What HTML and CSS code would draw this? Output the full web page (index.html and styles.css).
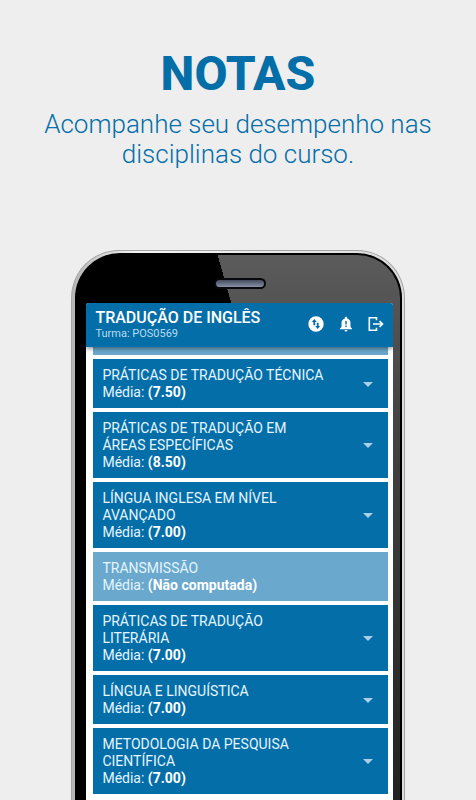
FILE: index.html
```html
<!DOCTYPE html>
<html lang="pt-BR">
<head>
  <meta charset="utf-8">
  <meta name="viewport" content="width=device-width, initial-scale=1">
  <title>Notas</title>
  <link rel="stylesheet" href="styles.css">
</head>
<body>
  <header class="intro">
    <h1>NOTAS</h1>
    <p>Acompanhe seu desempenho nas disciplinas do curso.</p>
  </header>

  <main class="phone">
    <div class="bezel">
      <div class="speaker"></div>
      <div class="screen">
        <div class="appbar">
          <div class="course">
            <h2>TRADUÇÃO DE INGLÊS</h2>
            <p>Turma: POS0569</p>
          </div>
          <button class="icon" aria-label="Trocar turma">
            <svg viewBox="0 0 16 16"><circle cx="8" cy="8" r="7.700" fill="#fff"/><path d="M6.300 3L3.800 6H5.400V9.200H7.200V6H8.800z M9.700 13L12.200 10H10.600V6.800H8.800V10H7.200z" fill="#046ea9"/></svg>
          </button>
          <button class="icon" aria-label="Avisos">
            <svg viewBox="0 0 16 16"><path d="M8 .8c-.7 0-1.200.5-1.200 1.200v.5C4.600 3.100 3.500 4.900 3.500 7v4L2 12.500v.8h12v-.8L12.500 11V7c0-2.100-1.100-3.900-3.300-4.500V2c0-.7-.5-1.200-1.200-1.200zM6.500 14a1.500 1.500 0 0 0 3 0z" fill="#fff"/><path d="M7.300 5h1.400v3.500H7.300zM7.300 9.600h1.400V11H7.300z" fill="#046ea9"/></svg>
          </button>
          <button class="icon" aria-label="Sair">
            <svg viewBox="0 0 16 16" fill="none" stroke="#fff" stroke-width="1.600"><path d="M8.500 4.200V1.800H1.300v12.400h7.200v-2.400"/><path d="M5 8h9"/><path d="M11.500 5l3 3-3 3"/></svg>
          </button>
        </div>

        <div class="list">
          <div class="card off peek"></div>
          <button class="card">
            <span class="text"><span>PRÁTICAS DE TRADUÇÃO TÉCNICA</span><span>Média: <b>(7.50)</b></span></span>
            <span class="arrow"></span>
          </button>
          <button class="card">
            <span class="text"><span>PRÁTICAS DE TRADUÇÃO EM ÁREAS ESPECÍFICAS</span><span>Média: <b>(8.50)</b></span></span>
            <span class="arrow"></span>
          </button>
          <button class="card">
            <span class="text"><span>LÍNGUA INGLESA EM NÍVEL AVANÇADO</span><span>Média: <b>(7.00)</b></span></span>
            <span class="arrow"></span>
          </button>
          <div class="card off">
            <span class="text"><span>TRANSMISSÃO</span><span>Média: <b>(Não computada)</b></span></span>
          </div>
          <button class="card">
            <span class="text"><span>PRÁTICAS DE TRADUÇÃO LITERÁRIA</span><span>Média: <b>(7.00)</b></span></span>
            <span class="arrow"></span>
          </button>
          <button class="card">
            <span class="text"><span>LÍNGUA E LINGUÍSTICA</span><span>Média: <b>(7.00)</b></span></span>
            <span class="arrow"></span>
          </button>
          <button class="card">
            <span class="text"><span>METODOLOGIA DA PESQUISA CIENTÍFICA</span><span>Média: <b>(7.00)</b></span></span>
            <span class="arrow"></span>
          </button>
        </div>
      </div>
    </div>
  </main>
</body>
</html>
```
FILE: styles.css
```css
* {
  box-sizing: border-box;
}

body {
  display: flex;
  flex-direction: column;
  height: 100vh;
  margin: 0;
  overflow: hidden;
  background-color: #eeeeee;
  color: #046ea9;
  font-family: Roboto, Arial, sans-serif;
}

h1, h2, p {
  margin: 0;
}

.intro {
  flex: none;
  padding: 44px 32px 81px;
  text-align: center;
}

.intro h1 {
  font-size: 48px;
  font-weight: 800;
  line-height: 60px;
}

.intro p {
  margin-top: 5px;
  font-size: 26px;
  font-weight: 350;
  line-height: 30px;
}

/* phone body, it runs off the bottom of the page */
.phone {
  flex: 1;
  display: flex;
  width: 70%;
  min-width: 320px;
  margin: 0 auto;
  padding: 2px 2px 0 3px;
  border: 1px solid #a5a5a5;
  border-bottom: none;
  border-radius: 48px 48px 0 0;
  background: linear-gradient(90deg, #b5b5b5, #f4f4f4 20%, #dddddd);
}

.bezel {
  flex: 1;
  min-width: 0;
  display: flex;
  flex-direction: column;
  align-items: center;
  padding: 23px 7px 0 9px;
  border: 2px solid #000;
  border-bottom: none;
  border-radius: 45px 45px 0 0;
  background: linear-gradient(74deg, #000 46%, transparent 46%) 0 0 / 100% 52px no-repeat,
    linear-gradient(90deg, #000 50%, transparent 50%) 0 52px no-repeat,
    linear-gradient(#5b5b5b, #444444 30%, #222222);
}

.speaker {
  flex: none;
  width: 52px;
  height: 11px;
  margin-bottom: 14px;
  border: 2px solid #08090d;
  border-radius: 6px;
  background: linear-gradient(#454b5c, #8791a8);
}

.screen {
  flex: 1;
  align-self: stretch;
  overflow: hidden;
  border-radius: 3px 3px 0 0;
  background-color: #fff;
}

.appbar {
  position: relative;
  display: flex;
  align-items: center;
  gap: 14px;
  height: 44px;
  padding: 0 9px 2px;
  background-color: #046ea9;
  box-shadow: 0 2px 4px rgba(0, 0, 0, 0.4);
  color: #fff;
}

.course {
  flex: 1;
  padding-top: 2px;
  white-space: nowrap;
}

.course h2 {
  font-size: 16px;
  font-weight: 500;
  line-height: 18px;
}

.course p {
  color: #b8dcf0;
  font-size: 11px;
  line-height: 14px;
}

.icon {
  width: 16px;
  height: 16px;
  padding: 0;
  border: none;
  background: none;
}

.icon svg {
  display: block;
}

.list {
  display: flex;
  flex-direction: column;
  gap: 4px;
  padding: 0 5px 0 7px;
}

.card {
  display: flex;
  align-items: center;
  justify-content: space-between;
  padding: 8px 15px 7px 9px;
  border: none;
  background-color: #046ea9;
  color: #e4f5ff;
  font-family: inherit;
  font-size: 14px;
  line-height: 17px;
  text-align: left;
}

.card b {
  color: #fff;
}

.off {
  background-color: #6aa8cd;
}

/* bottom edge of the card scrolled under the bar */
.peek {
  height: 8px;
  padding: 0;
}

.text {
  display: flex;
  flex-direction: column;
  max-width: 230px;
}

.arrow {
  border: 5px solid transparent;
  border-top-color: #a9d0e8;
  border-bottom: none;
}
```
